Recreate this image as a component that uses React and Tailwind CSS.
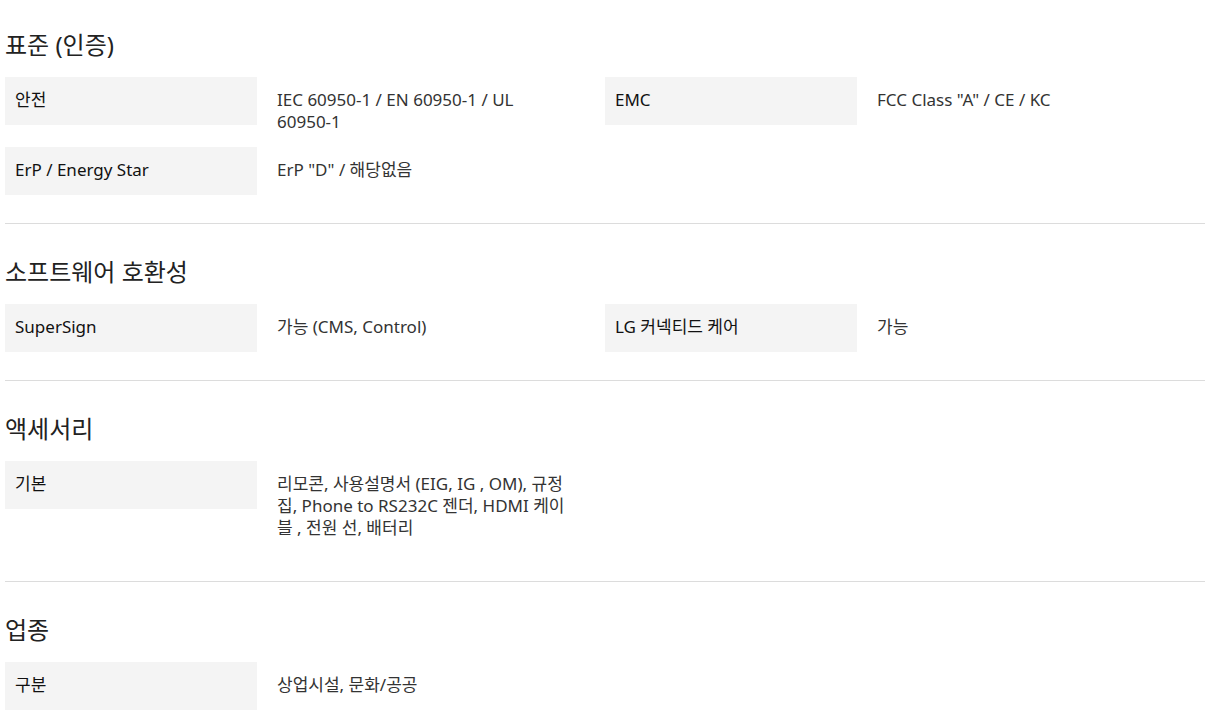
const sections = [
  {
    title: "표준 (인증)",
    rows: [
      [
        { label: "안전", value: "IEC 60950-1 / EN 60950-1 / UL\n60950-1" },
        { label: "EMC", value: 'FCC Class "A" / CE / KC' },
      ],
      [{ label: "ErP / Energy Star", value: 'ErP "D" / 해당없음' }],
    ],
  },
  {
    title: "소프트웨어 호환성",
    rows: [
      [
        { label: "SuperSign", value: "가능 (CMS, Control)" },
        { label: "LG 커넥티드 케어", value: "가능" },
      ],
    ],
  },
  {
    title: "액세서리",
    rows: [
      [
        {
          label: "기본",
          value:
            "리모콘, 사용설명서 (EIG, IG , OM), 규정\n집, Phone to RS232C 젠더, HDMI 케이\n블 , 전원 선, 배터리",
        },
      ],
    ],
  },
  {
    title: "업종",
    rows: [[{ label: "구분", value: "상업시설, 문화/공공" }]],
  },
];

function Spec({ label, value }) {
  return (
    <div className="flex items-start">
      <div className="w-[252px] h-[48px] shrink-0 bg-[#f4f4f4] px-[10px] pt-[12px] text-[17px] leading-[22px] text-[#111]">
        {label}
      </div>
      <div className="ml-[20px] w-[320px] pt-[12px] pb-[14px] text-[17px] leading-[22px] text-[#333] whitespace-pre-line">
        {value}
      </div>
    </div>
  );
}

export default function App() {
  return (
    <div
      className="w-[1210px] bg-white px-[5px]"
      style={{ fontFamily: '"Noto Sans", "Noto Sans CJK KR", sans-serif' }}
    >
      {sections.map((section, index) => (
        <section
          key={section.title}
          className={`pb-[28px] border-b border-[#dcdcdc] ${
            index === 0 ? "pt-[29px]" : "pt-[32px]"
          }`}
        >
          <h2 className="mb-[16px] text-[24px] leading-[32px] text-[#222]">
            {section.title}
          </h2>
          {section.rows.map((row, rowIndex) => (
            <div key={rowIndex} className="grid grid-cols-2">
              {row.map((spec) => (
                <Spec key={spec.label} {...spec} />
              ))}
            </div>
          ))}
        </section>
      ))}
    </div>
  );
}
